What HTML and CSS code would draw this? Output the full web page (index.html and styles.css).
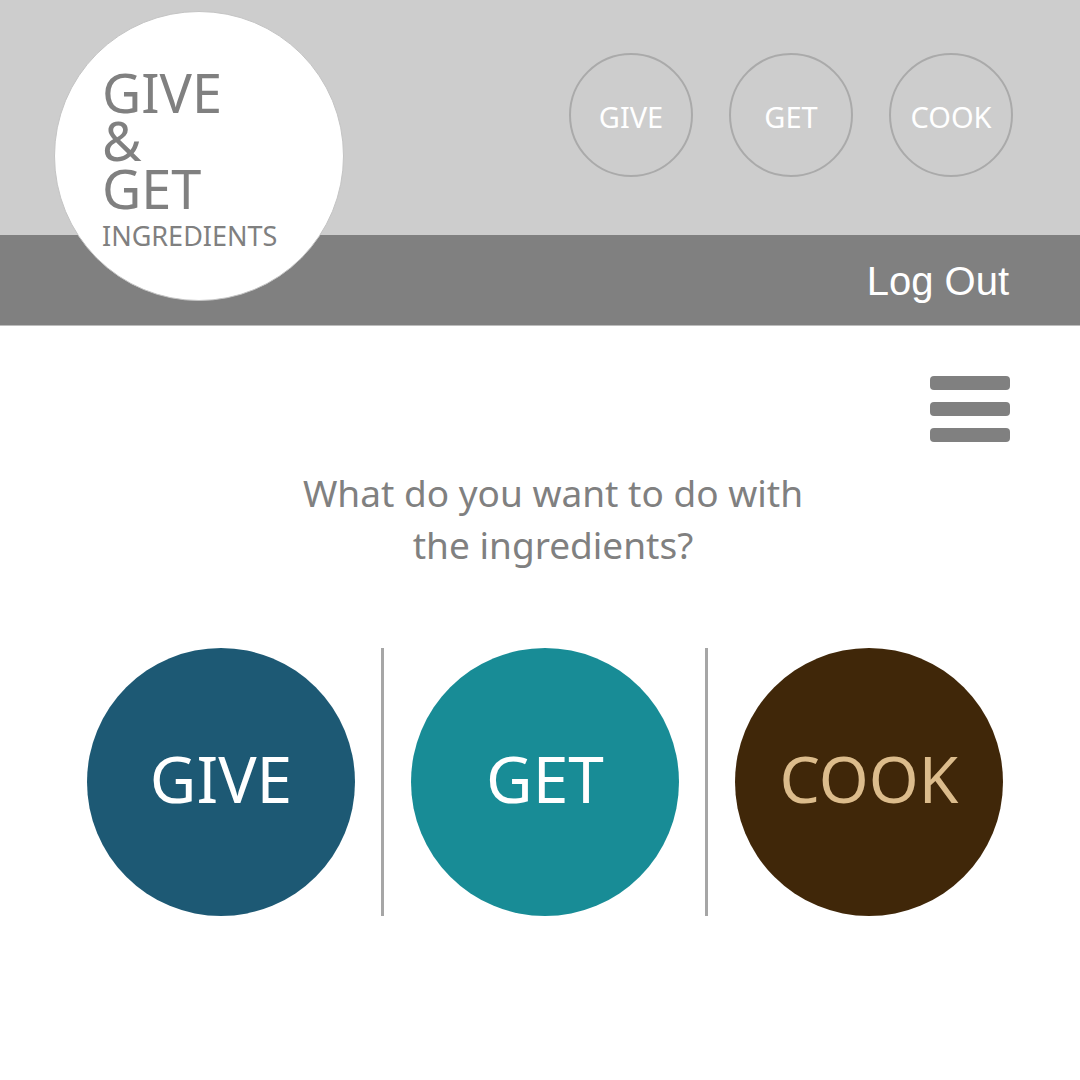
FILE: index.html
```html
<!DOCTYPE html>
<html lang="en">
<head>
<meta charset="utf-8">
<meta name="viewport" content="width=device-width, initial-scale=1">
<title>Give &amp; Get Ingredients</title>
<link rel="stylesheet" href="styles.css">
</head>
<body>
<header class="header">
  <div class="masthead">
    <a class="logo" href="#">
      <span class="logo-name">GIVE<br>&amp;<br>GET</span>
      <span class="logo-sub">INGREDIENTS</span>
    </a>
    <nav class="nav">
      <a class="nav-link" href="#">GIVE</a>
      <a class="nav-link" href="#">GET</a>
      <a class="nav-link" href="#">COOK</a>
    </nav>
  </div>
  <div class="account">
    <a class="logout" href="#">Log Out</a>
  </div>
</header>
<main class="main">
  <button class="menu" type="button" aria-label="Menu">
    <span class="menu-bar"></span>
    <span class="menu-bar"></span>
    <span class="menu-bar"></span>
  </button>
  <h1 class="question">What do you want to do with the ingredients?</h1>
  <div class="choices">
    <div class="choice"><a class="choice-link give" href="#">GIVE</a></div>
    <div class="choice"><a class="choice-link get" href="#">GET</a></div>
    <div class="choice"><a class="choice-link cook" href="#">COOK</a></div>
  </div>
</main>
</body>
</html>
```
FILE: styles.css
```css
* {
  box-sizing: border-box;
}

body {
  margin: 0;
  background: #fff;
  color: #808080;
  font-family: "Noto Sans", "Open Sans", sans-serif;
}

a {
  text-decoration: none;
}

.header {
  position: relative;
}

.masthead {
  display: flex;
  justify-content: flex-end;
  padding: 53px 67px 58px 54px;
  background: #cdcdcd;
}

.logo {
  position: absolute;
  top: 11px;
  left: 54px;
  display: flex;
  flex-direction: column;
  width: 290px;
  height: 290px;
  padding: 56px 0 0 47px;
  border: 1px solid #c4c4c4;
  border-radius: 50%;
  background: #fff;
  color: #808080;
}

.logo-name {
  font-size: 54px;
  line-height: 48px;
}

.logo-sub {
  font-size: 27px;
  line-height: 48px;
}

.nav {
  display: flex;
  gap: 36px;
}

.nav-link {
  display: flex;
  align-items: center;
  justify-content: center;
  width: 124px;
  height: 124px;
  padding-top: 2px;
  border: 2px solid #aaa;
  border-radius: 50%;
  color: #fff;
  font-size: 29px;
}

.account {
  display: flex;
  align-items: center;
  justify-content: flex-end;
  height: 91px;
  padding: 2px 71px 0;
  border-bottom: 1px solid #bdbdbd;
  background: #808080;
}

.logout {
  color: #fff;
  font: 40px "Liberation Sans", Arial, sans-serif;
}

.main {
  display: flex;
  flex-direction: column;
  align-items: center;
  padding: 50px 70px;
}

.menu {
  display: flex;
  flex-direction: column;
  align-self: flex-end;
  gap: 12px;
  width: 80px;
  padding: 0;
  border: 0;
  background: none;
}

.menu-bar {
  width: 100%;
  height: 14px;
  border-radius: 4px;
  background: #808080;
}

.question {
  max-width: 540px;
  margin: 25px 0 77px 26px;
  font-size: 37px;
  font-weight: 400;
  line-height: 52px;
  text-align: center;
}

.choices {
  display: flex;
  margin-left: 9px;
}

.choice {
  padding: 0 26px 0 27px;
}

.choice + .choice {
  border-left: 3px solid #a6a6a6;
}

.choice-link {
  display: flex;
  align-items: center;
  justify-content: center;
  width: 268px;
  height: 268px;
  padding-bottom: 8px;
  border-radius: 50%;
  color: #fff;
  font-size: 64px;
}

.give {
  background: #1d5974;
}

.get {
  background: #188c96;
}

.cook {
  background: #402709;
  color: #dcbc8c;
}
```
